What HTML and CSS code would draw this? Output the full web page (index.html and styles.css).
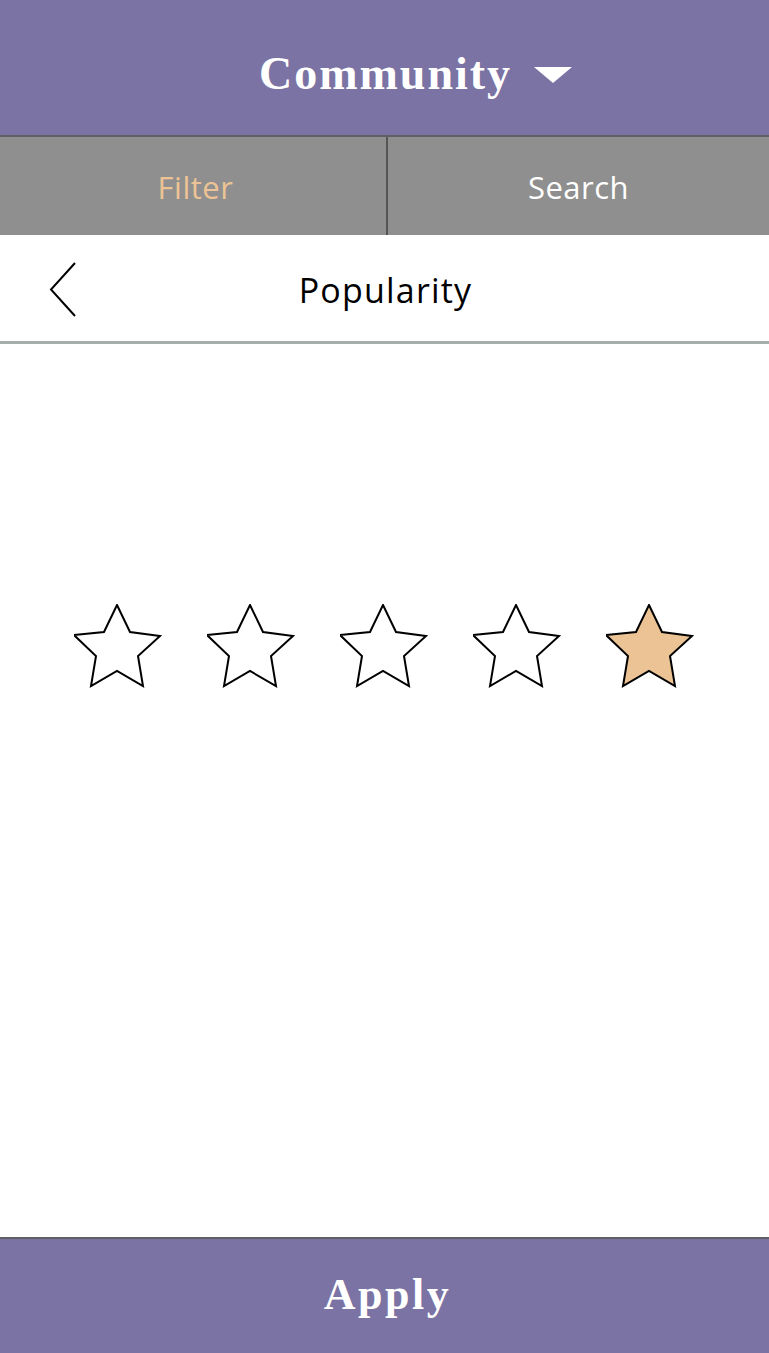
FILE: index.html
```html
<!DOCTYPE html>
<html>
<head>
<meta charset="utf-8">
<link rel="stylesheet" href="styles.css">
</head>
<body>
<div class="app">
  <header class="topbar">
    <span class="title">Community</span>
    <svg class="caret" width="38" height="16" viewBox="0 0 38 16"><polygon points="0,0 38,0 19,16" fill="#fff"/></svg>
  </header>
  <nav class="tabs">
    <div class="tab active">Filter</div>
    <div class="tab">Search</div>
  </nav>
  <div class="subhead">
    <svg class="back" width="28" height="56" viewBox="0 0 28 56"><polyline points="26,1 2,27.5 26,54" fill="none" stroke="#000" stroke-width="2"/></svg>
    <span class="subtitle">Popularity</span>
  </div>
  <main class="content">
    <div class="stars">
      <svg class="star" width="88" height="84" viewBox="0 0 88 84"><polygon points="43,1 56,28 86,32 64,52 69,82 43,67 17,82 22,52 0,31 30,28" fill="#fff" stroke="#000" stroke-width="2"/></svg>
      <svg class="star" width="88" height="84" viewBox="0 0 88 84"><polygon points="43,1 56,28 86,32 64,52 69,82 43,67 17,82 22,52 0,31 30,28" fill="#fff" stroke="#000" stroke-width="2"/></svg>
      <svg class="star" width="88" height="84" viewBox="0 0 88 84"><polygon points="43,1 56,28 86,32 64,52 69,82 43,67 17,82 22,52 0,31 30,28" fill="#fff" stroke="#000" stroke-width="2"/></svg>
      <svg class="star" width="88" height="84" viewBox="0 0 88 84"><polygon points="43,1 56,28 86,32 64,52 69,82 43,67 17,82 22,52 0,31 30,28" fill="#fff" stroke="#000" stroke-width="2"/></svg>
      <svg class="star" width="88" height="84" viewBox="0 0 88 84"><polygon points="43,1 56,28 86,32 64,52 69,82 43,67 17,82 22,52 0,31 30,28" fill="#ecc394" stroke="#000" stroke-width="2"/></svg>
    </div>
  </main>
  <footer class="apply">Apply</footer>
</div>
</body>
</html>
```
FILE: styles.css
```css
* { box-sizing: border-box; }
html, body { margin: 0; padding: 0; }
body { width: 769px; height: 1353px; background: #fff; overflow: hidden; }
.app { display: flex; flex-direction: column; height: 1353px; }
.topbar {
  height: 137px;
  background: #7b73a3;
  border-bottom: 2px solid #5f5f66;
  display: flex;
  align-items: center;
  justify-content: center;
  gap: 22px;
  padding-left: 62px;
  padding-top: 12px;
}
.title {
  font-family: "Liberation Serif", "DejaVu Serif", serif;
  font-weight: bold;
  font-size: 46px;
  color: #fff;
  letter-spacing: 2px;
}
.caret { margin-top: 2px; }
.tabs { height: 98px; display: flex; background: #8f8f8f; }
.tab {
  flex: 1;
  display: flex;
  align-items: center;
  justify-content: center;
  font-family: "Open Sans", "Lato", sans-serif;
  font-size: 31px;
  letter-spacing: 0.5px;
  color: #fff;
  padding-top: 2px;
}
.tab.active { color: #ecc394; border-right: 2px solid #555; padding-left: 5px; flex: 0 0 388px; }
.subhead {
  height: 109px;
  border-bottom: 3px solid #a4aeab;
  display: flex;
  align-items: center;
  position: relative;
  justify-content: center;
}
.back { position: absolute; left: 49px; top: 27px; }
.subtitle {
  font-family: "Open Sans", "Lato", sans-serif;
  font-size: 34px;
  letter-spacing: 1.2px;
  color: #000;
  padding-top: 4px;
  padding-left: 2px;
}
.content { flex: 1; display: flex; justify-content: center; padding-top: 260px; }
.stars { display: flex; gap: 45px; height: 84px; padding-right: 1px; }
.apply {
  height: 116px;
  background: #7b73a3;
  border-top: 2px solid #5f5f66;
  display: flex;
  align-items: center;
  justify-content: center;
  font-family: "Liberation Serif", "DejaVu Serif", serif;
  font-weight: bold;
  font-size: 44px;
  letter-spacing: 2.5px;
  color: #fff;
  padding-bottom: 4px;
  padding-left: 6px;
}
```
